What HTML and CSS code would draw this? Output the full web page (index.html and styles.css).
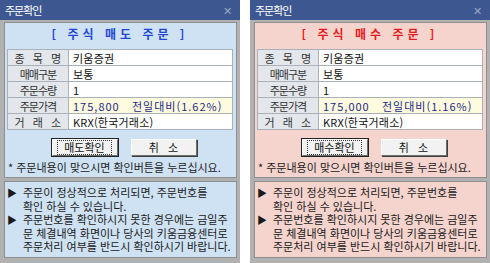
FILE: index.html
```html
<!DOCTYPE html>
<html lang="ko">
<head>
    <meta charset="utf-8" />
    <title>주문확인</title>
    <link rel="stylesheet" href="styles.css">
</head>
<body>
    <div class="screen">
        <!-- 매도 주문 확인 -->
        <div class="dialog dialog-sell">
            <div class="titlebar">
                <span class="title">주문확인</span>
                <span class="close">✕</span>
            </div>
            <div class="frame">
                <div class="panel panel-top">
                    <div class="heading">[ 주식 매도 주문 ]</div>
                    <table class="order-table">
                        <tr><th class="spaced">종 목 명</th><td>키움증권</td></tr>
                        <tr><th>매매구분</th><td>보통</td></tr>
                        <tr><th>주문수량</th><td>1</td></tr>
                        <tr><th>주문가격</th><td class="price">175,800   전일대비(1.62%)</td></tr>
                        <tr><th class="spaced">거 래 소</th><td>KRX(한국거래소)</td></tr>
                    </table>
                    <div class="buttons">
                        <button class="btn btn-default"><span>매도확인</span></button>
                        <button class="btn"><span>취&nbsp;&nbsp;&nbsp;소</span></button>
                    </div>
                    <p class="note">* 주문내용이 맞으시면 확인버튼을 누르십시요.</p>
                </div>
                <div class="panel panel-bottom">
                    <div class="info-item">
                        <span class="arrow">▶</span>
                        <span class="info-text">주문이 정상적으로 처리되면, 주문번호를<br>확인 하실 수 있습니다.</span>
                    </div>
                    <div class="info-item">
                        <span class="arrow">▶</span>
                        <span class="info-text">주문번호를 확인하시지 못한 경우에는 금일주<br>문 체결내역 화면이나 당사의 키움금융센터로<br>주문처리 여부를 반드시 확인하시기 바랍니다.</span>
                    </div>
                </div>
            </div>
        </div>

        <!-- 매수 주문 확인 -->
        <div class="dialog dialog-buy">
            <div class="titlebar">
                <span class="title">주문확인</span>
                <span class="close">✕</span>
            </div>
            <div class="frame">
                <div class="panel panel-top">
                    <div class="heading">[ 주식 매수 주문 ]</div>
                    <table class="order-table">
                        <tr><th class="spaced">종 목 명</th><td>키움증권</td></tr>
                        <tr><th>매매구분</th><td>보통</td></tr>
                        <tr><th>주문수량</th><td>1</td></tr>
                        <tr><th>주문가격</th><td class="price">175,000   전일대비(1.16%)</td></tr>
                        <tr><th class="spaced">거 래 소</th><td>KRX(한국거래소)</td></tr>
                    </table>
                    <div class="buttons">
                        <button class="btn btn-default"><span>매수확인</span></button>
                        <button class="btn"><span>취&nbsp;&nbsp;&nbsp;소</span></button>
                    </div>
                    <p class="note">* 주문내용이 맞으시면 확인버튼을 누르십시요.</p>
                </div>
                <div class="panel panel-bottom">
                    <div class="info-item">
                        <span class="arrow">▶</span>
                        <span class="info-text">주문이 정상적으로 처리되면, 주문번호를<br>확인 하실 수 있습니다.</span>
                    </div>
                    <div class="info-item">
                        <span class="arrow">▶</span>
                        <span class="info-text">주문번호를 확인하시지 못한 경우에는 금일주<br>문 체결내역 화면이나 당사의 키움금융센터로<br>주문처리 여부를 반드시 확인하시기 바랍니다.</span>
                    </div>
                </div>
            </div>
        </div>
    </div>
</body>
</html>
```

FILE: styles.css
```css
* {
    margin: 0;
    padding: 0;
    box-sizing: border-box;
}

body {
    font-family: "Noto Sans CJK KR", "Noto Sans", sans-serif;
    font-size: 11px;
    color: #222;
    background: #fff;
}

.screen {
    display: flex;
    gap: 10px;
    width: 490px;
    height: 263px;
}

.dialog {
    width: 240px;
    height: 263px;
    display: flex;
    flex-direction: column;
    background: #b1b1b1;
}

.titlebar {
    height: 20px;
    background: #3d5791;
    color: #fff;
    display: flex;
    align-items: center;
    justify-content: space-between;
    padding: 0 8px 0 5px;
}

.title {
    font-size: 11px;
    letter-spacing: -1px;
    line-height: 20px;
}

.close {
    color: #9aa6c2;
    font-size: 11px;
}

.frame {
    flex: 1;
    display: flex;
    flex-direction: column;
    gap: 3px;
    padding: 2px 3px 5px 4px;
}

.panel {
    border: 1px solid #8e8e8e;
}

.dialog-sell .panel {
    background: #cfe2f4;
}

.dialog-buy .panel {
    background: #f5d4ce;
}

.panel-top {
    height: 156px;
    padding: 3px 3px 0 2px;
}

.panel-bottom {
    flex: 1;
    padding: 4px 0 0 2px;
}

.heading {
    text-align: center;
    font-size: 12px;
    font-weight: bold;
    letter-spacing: 4px;
    line-height: 16px;
    margin-bottom: 7px;
}

.dialog-sell .heading {
    color: #1f47d6;
}

.dialog-buy .heading {
    color: #e81c1c;
}

.order-table {
    width: 100%;
    border-collapse: collapse;
    background: #fff;
}

.order-table th,
.order-table td {
    border: 1px solid #a9b1bb;
    height: 16px;
    line-height: 14px;
    font-weight: normal;
    white-space: pre;
}

.order-table th {
    width: 61px;
    background: #e3e7ec;
    color: #333;
    text-align: center;
    letter-spacing: -1px;
}

.order-table th.spaced {
    letter-spacing: 2.5px;
    padding-left: 2px;
}

.order-table td {
    padding-left: 4px;
    color: #111;
    letter-spacing: 0.2px;
}

.order-table td.price {
    background: #fffbdf;
    color: #1c2a86;
    letter-spacing: 1px;
}

.buttons {
    display: flex;
    justify-content: center;
    gap: 13px;
    margin-top: 9px;
    padding-left: 8px;
}

.btn {
    width: 66px;
    height: 17px;
    font-family: inherit;
    font-size: 11px;
    color: #111;
    background: #f2f2f2;
    border: 1px solid;
    border-color: #fff #6e6e6e #6e6e6e #fff;
    box-shadow: 1px 1px 0 #404040;
    display: flex;
    align-items: center;
    justify-content: center;
    line-height: 13px;
}

.btn-default {
    outline: 1px solid #222;
}

.btn-default span {
    border: 1px dotted #333;
    padding: 0 6px;
}

.note {
    margin-top: 5px;
    line-height: 12px;
    color: #222;
    padding-left: 1px;
    white-space: nowrap;
}

.info-item {
    display: flex;
    line-height: 13.5px;
    color: #1a1a1a;
}

.info-text {
    white-space: nowrap;
}

.arrow {
    width: 16px;
    flex-shrink: 0;
    font-size: 10px;
}
```
